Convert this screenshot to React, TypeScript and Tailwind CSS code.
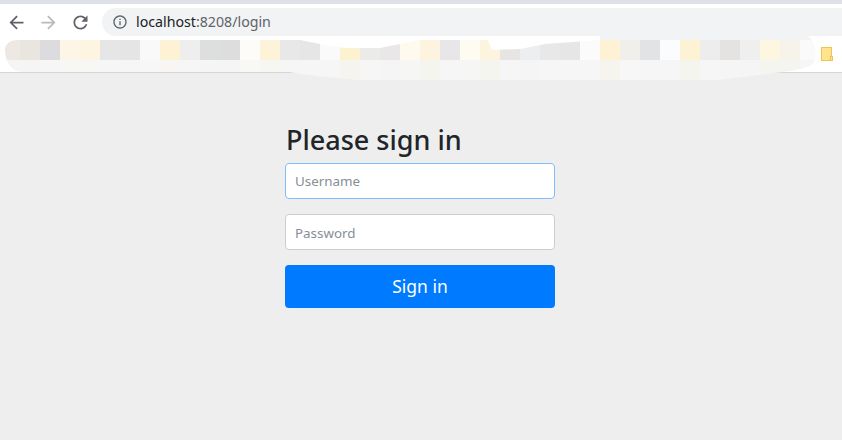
const topTiles = [
  "#ede8e2", "#e9e5df", "#dcdcde", "#fdf6e6", "#fdf4e2", "#e6e6e6", "#e5e5e5", "#f9f9f9", "#fdf2d4", "#eeeeee",
  "#dddede", "#dddddd", "#fefcf8", "#fdf3d8", "#e8e8e8", "#e6e6e6", "#fafafa", "#fdf2d0", "#ebebe9", "#e9e7e7",
  "#fefbee", "#fdf3de", "#e8e6e8", "#fefcf0", "#fdf4e0", "#e6e5e3", "#eceef0", "#e8e8e8", "#e6e6e6", "#fafbfa",
  "#fdf2d4", "#f0efec", "#e1e3e4", "#fafcfe", "#fdf2d3", "#ededed", "#e4e3e1", "#efefef", "#fdf6e1", "#f6f3ea",
  "#fafafa",
];

const bottomTiles = [
  "#f5f5f5", "#f5f5f4", "#f6f6f6", "#f7f7f6", "#f7f7f5", "#f6f6f6", "#f6f6f6", "#f7f7f7", "#f7f6f2", "#f6f6f6",
  "#f5f5f5", "#f5f5f5", "#f8f8f6", "#f7f6f3", "#f6f6f6", "#f6f6f6", "#f6f6f6", "#f5f4ef", "#f6f6f6", "#f5f5f5",
  "#f6f6f5", "#f5f5f0", "#f6f6f6", "#f6f6f5", "#f5f5f0", "#f6f6f6", "#f5f5f5", "#f6f6f6", "#f6f6f6", "#f6f6f6",
  "#f5f4ef", "#f7f7f7", "#f6f6f6", "#f6f6f6", "#f5f5f0", "#f6f6f6", "#f5f5f5", "#f5f5f5", "#f5f5f0", "#f4f4f0",
  "#f6f6f6",
];

const blobPath =
  "M5 50 C5 44 10 40 18 40 L300 40 L320 44 L345 48 L380 48 L400 44 L420 40 L488 40 L492 50 L520 49 L545 44 L600 40 L600 36 L808 36 C815 42 817 52 815 60 C812 68 800 70 760 75 L718 80 L360 80 L335 78 L300 74 L290 72 L20 72 C10 70 5 60 5 50 Z";

function ArrowIcon({ flip, color }: { flip?: boolean; color: string }) {
  return (
    <svg width="21" height="21" viewBox="0 0 24 24" fill={color} className={flip ? "rotate-180" : ""}>
      <path d="M20 11H7.83l5.59-5.59L12 4l-8 8 8 8 1.41-1.41L7.83 13H20v-2z" />
    </svg>
  );
}

export default function App() {
  return (
    <div className="relative flex h-[440px] w-[842px] flex-col overflow-hidden bg-[#eeeeee] font-['Noto_Sans',sans-serif]">
      {/* Browser chrome */}
      <div className="h-1 bg-[#dee1e6]" />
      <div className="flex h-9 items-start bg-white pt-1">
        <div className="flex h-7 w-[102px] items-center pl-[6px]">
          <ArrowIcon color="#5f6368" />
          <div className="ml-[11px]">
            <ArrowIcon flip color="#b8babd" />
          </div>
          <svg width="21" height="21" viewBox="0 0 24 24" fill="#5f6368" className="ml-[11px]">
            <path d="M17.65 6.35C16.2 4.9 14.21 4 12 4c-4.42 0-7.99 3.58-7.99 8s3.57 8 7.99 8c3.73 0 6.84-2.55 7.73-6h-2.08c-.82 2.33-3.04 4-5.65 4-3.31 0-6-2.69-6-6s2.69-6 6-6c1.66 0 3.14.69 4.22 1.78L13 11h7V4l-2.35 2.35z" />
          </svg>
        </div>
        <div className="flex h-7 flex-1 items-center rounded-l-[14px] bg-[#f1f3f4] pl-[10px]">
          <svg width="16" height="16" viewBox="0 0 24 24" fill="#5f6368">
            <path d="M11 7h2v2h-2zm0 4h2v6h-2zm1-9C6.48 2 2 6.48 2 12s4.48 10 10 10 10-4.48 10-10S17.52 2 12 2zm0 18c-4.41 0-8-3.59-8-8s3.59-8 8-8 8 3.59 8 8-3.59 8-8 8z" />
          </svg>
          <span className="ml-[8px] text-[14.2px] leading-none text-[#202124]">
            localhost<span className="text-[#5f6368]">:8208/login</span>
          </span>
        </div>
      </div>

      {/* Bookmarks bar */}
      <div className="flex h-[33px] justify-end border-b border-[#d6d6d6] bg-white pr-[9px] pt-[7px]">
        <svg width="12" height="15" viewBox="0 0 12 15">
          <rect x="0.5" y="0.5" width="10" height="13" fill="#ffe38f" stroke="#ecc64f" />
          <rect x="9.5" y="9.5" width="2" height="4" fill="#ffe38f" stroke="#ecc64f" />
        </svg>
      </div>

      {/* Smeared-out bookmarks */}
      <svg width="842" height="90" viewBox="0 0 842 90" className="absolute left-0 top-0">
        <defs>
          <clipPath id="blob">
            <path d={blobPath} />
          </clipPath>
        </defs>
        <g clipPath="url(#blob)">
          <rect x="0" y="30" width="842" height="10" fill="#f1f3f4" />
          {topTiles.map((c, i) => (
            <rect key={i} x={i * 20} y="40" width="20" height="20" fill={c} />
          ))}
          {bottomTiles.map((c, i) => (
            <rect key={i} x={i * 20} y="60" width="20" height="20" fill={c} />
          ))}
        </g>
      </svg>

      {/* Login form */}
      <form className="ml-[285px] flex w-[270px] flex-col pt-[48px]">
        <h2 className="mb-[4px] pl-px text-[27px] leading-[38px] font-medium text-[#212529]">Please sign in</h2>
        <input
          placeholder="Username"
          className="h-9 w-full rounded border border-[#80bdff] bg-white px-[9px] text-[13.4px] outline-none placeholder:text-[#868e96]"
        />
        <input
          placeholder="Password"
          className="mt-[15px] h-9 w-full rounded border border-[#cccccc] bg-white px-[9px] pt-[2px] text-[13.4px] outline-none placeholder:text-[#868e96]"
        />
        <button
          type="button"
          className="mt-[15px] h-[43px] w-full rounded bg-[#007bff] text-[17.5px] text-white"
        >
          Sign in
        </button>
      </form>
    </div>
  );
}
